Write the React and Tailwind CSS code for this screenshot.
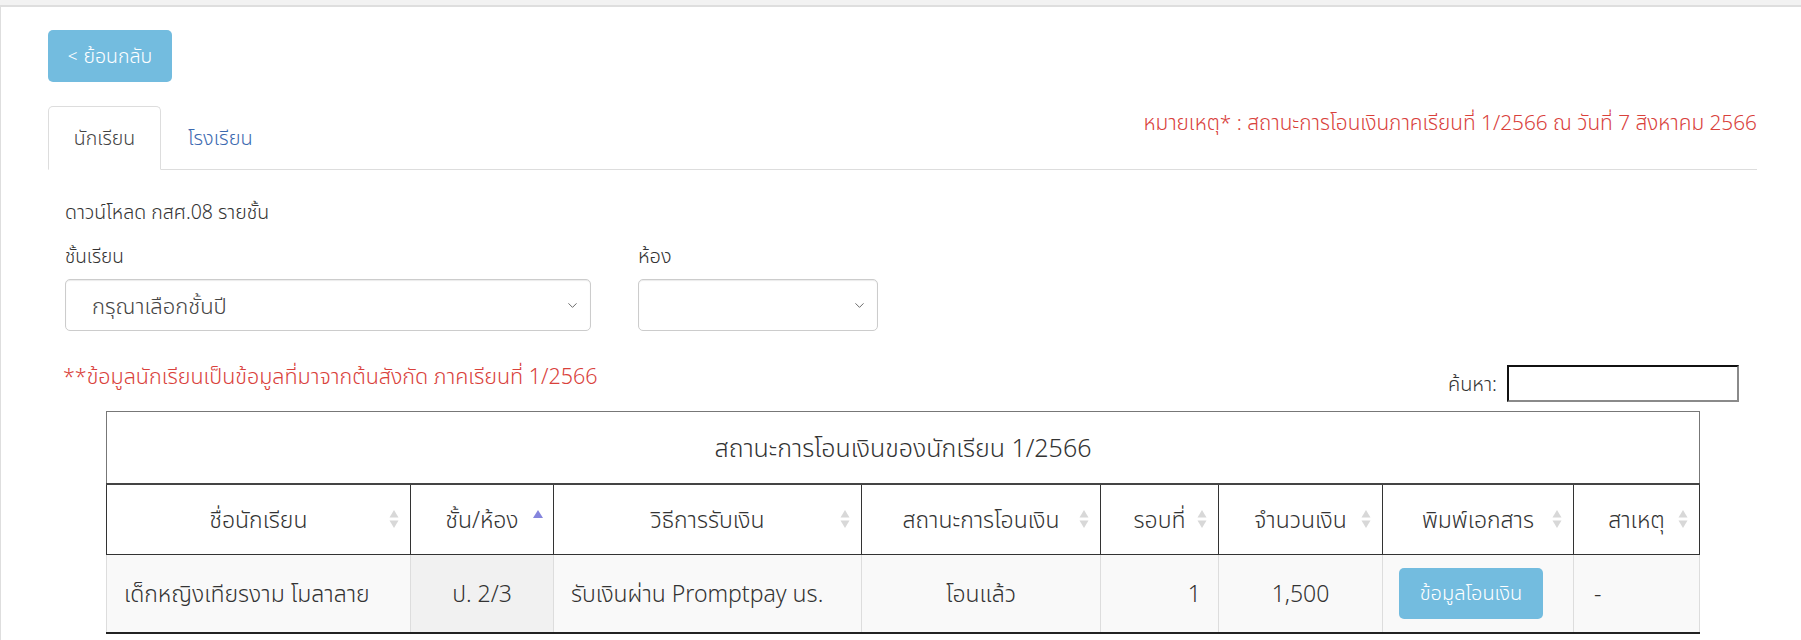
import { ChevronDown } from "lucide-react";

const SortIcon = ({ active }) => {
  if (active) {
    return (
      <svg width="10" height="8" viewBox="0 0 10 8" className="absolute right-[10px] top-[25px]">
        <path d="M5 0 L10 8 L0 8 Z" fill="#8585dd" />
      </svg>
    );
  }
  return (
    <svg width="10" height="20" viewBox="0 0 10 20" className="absolute right-[11px] top-1/2 -translate-y-1/2">
      <path d="M5 1 L9.5 8.5 L0.5 8.5 Z" fill="#d8d8d8" />
      <path d="M5 19 L9.5 11.5 L0.5 11.5 Z" fill="#d8d8d8" />
    </svg>
  );
};

const headers = [
  { label: "ชื่อนักเรียน", w: "w-[304px]" },
  { label: "ชั้น/ห้อง", w: "w-[143px]", active: true },
  { label: "วิธีการรับเงิน", w: "w-[308px]" },
  { label: "สถานะการโอนเงิน", w: "w-[239px]" },
  { label: "รอบที่", w: "w-[118px]" },
  { label: "จำนวนเงิน", w: "w-[164px]" },
  { label: "พิมพ์เอกสาร", w: "w-[191px]" },
  { label: "สาเหตุ", w: "w-[126px]" },
];

export default function App() {
  return (
    <div className="min-h-screen bg-[#f2f2f2] pt-[5px] text-[#333] font-light font-['Noto_Sans','Noto_Sans_Thai',sans-serif]">
      <div className="bg-white border-t-2 border-l border-[#dedede] min-h-[635px] pt-[23px] pl-[47px] pr-[44px]">
        {/* back button */}
        <button className="h-[52px] w-[124px] rounded-[5px] bg-[#73bcdf] text-white text-[19.5px] flex items-center justify-center gap-1.5">
          <span className="text-[17px]">&lt;</span> ย้อนกลับ
        </button>

        {/* tabs */}
        <div className="mt-[24px] flex justify-between border-b border-[#dddddd]">
          <div className="flex">
            <div className="h-[64px] w-[113px] -mb-px bg-white border border-[#dddddd] border-b-white rounded-t-[5px] flex items-center justify-center text-[19.5px] text-[#444]">
              นักเรียน
            </div>
            <div className="h-[63px] px-[27px] flex items-center text-[20px] text-[#3d6ab0]">โรงเรียน</div>
          </div>
          <div className="text-[20.8px] leading-[32px] text-[#d9413b]">
            หมายเหตุ* : สถานะการโอนเงินภาคเรียนที่ 1/2566 ณ วันที่ 7 สิงหาคม 2566
          </div>
        </div>

        {/* filter section */}
        <div className="pl-[17px] pr-[18px]">
          <div className="mt-[28px] text-[19.5px] leading-[28px]">ดาวน์โหลด กสศ.08 รายชั้น</div>

          <div className="mt-[17px] flex gap-[47px]">
            <div className="w-[526px]">
              <div className="text-[19px] leading-[26px]">ชั้นเรียน</div>
              <div className="mt-[10px] h-[52px] border border-[#cccccc] rounded-[5px] shadow-[inset_0_1px_1px_rgba(0,0,0,0.08)] flex items-center justify-between pl-[26px] pr-[10px]">
                <span className="text-[22px] text-[#444]">กรุณาเลือกชั้นปี</span>
                <ChevronDown size={15} strokeWidth={1.4} className="text-[#555]" />
              </div>
            </div>
            <div className="w-[240px]">
              <div className="text-[20px] leading-[26px]">ห้อง</div>
              <div className="mt-[10px] h-[52px] border border-[#cccccc] rounded-[5px] shadow-[inset_0_1px_1px_rgba(0,0,0,0.08)] flex items-center justify-end pr-[10px]">
                <ChevronDown size={15} strokeWidth={1.4} className="text-[#555]" />
              </div>
            </div>
          </div>

          <div className="mt-[29px] flex justify-between items-start">
            <div className="-ml-[2px] text-[21.5px] leading-[32px] text-[#d9413b]">
              **ข้อมูลนักเรียนเป็นข้อมูลที่มาจากต้นสังกัด ภาคเรียนที่ 1/2566
            </div>
            <div className="mt-[5px] flex items-center gap-[10px]">
              <span className="text-[20px]">ค้นหา:</span>
              <input className="h-[37px] w-[232px] border-2 border-t-[#111] border-l-[#111] border-b-[#8a8a8a] border-r-[#8a8a8a] bg-white outline-none" />
            </div>
          </div>

          {/* table */}
          <div className="mt-[9px] ml-[41px] mr-[40px]">
            <table className="w-full table-fixed border-collapse text-[23px]">
              <colgroup>
                {headers.map((h) => (
                  <col key={h.label} className={h.w} />
                ))}
              </colgroup>
              <thead>
                <tr className="h-[72px]">
                  <th colSpan={8} className="border border-[#777] font-light text-center text-[25px]">
                    สถานะการโอนเงินของนักเรียน 1/2566
                  </th>
                </tr>
                <tr className="h-[71px]">
                  {headers.map((h) => (
                    <th
                      key={h.label}
                      className="relative border border-[#333] border-t-2 border-t-[#444] font-light text-center"
                    >
                      {h.label}
                      <SortIcon active={h.active} />
                    </th>
                  ))}
                </tr>
              </thead>
              <tbody>
                <tr className="h-[78px] bg-[#f9f9f9] border-b-2 border-b-[#222]">
                  <td className="border-x border-[#dddddd] px-[17px] whitespace-nowrap">เด็กหญิงเทียรงาม โมลาลาย</td>
                  <td className="border-x border-[#dddddd] bg-[#f1f1f1] text-center">ป. 2/3</td>
                  <td className="border-x border-[#dddddd] px-[17px] whitespace-nowrap">รับเงินผ่าน Promptpay นร.</td>
                  <td className="border-x border-[#dddddd] text-center">โอนแล้ว</td>
                  <td className="border-x border-[#dddddd] px-[17px] text-right">1</td>
                  <td className="border-x border-[#dddddd] text-center">1,500</td>
                  <td className="border-x border-[#dddddd] pl-[16px]">
                    <button className="h-[51px] w-[144px] rounded-[5px] bg-[#73bcdf] text-white text-[20px]">
                      ข้อมูลโอนเงิน
                    </button>
                  </td>
                  <td className="border-x border-[#dddddd] pl-[20px]">-</td>
                </tr>
              </tbody>
            </table>
          </div>
        </div>
      </div>
    </div>
  );
}
